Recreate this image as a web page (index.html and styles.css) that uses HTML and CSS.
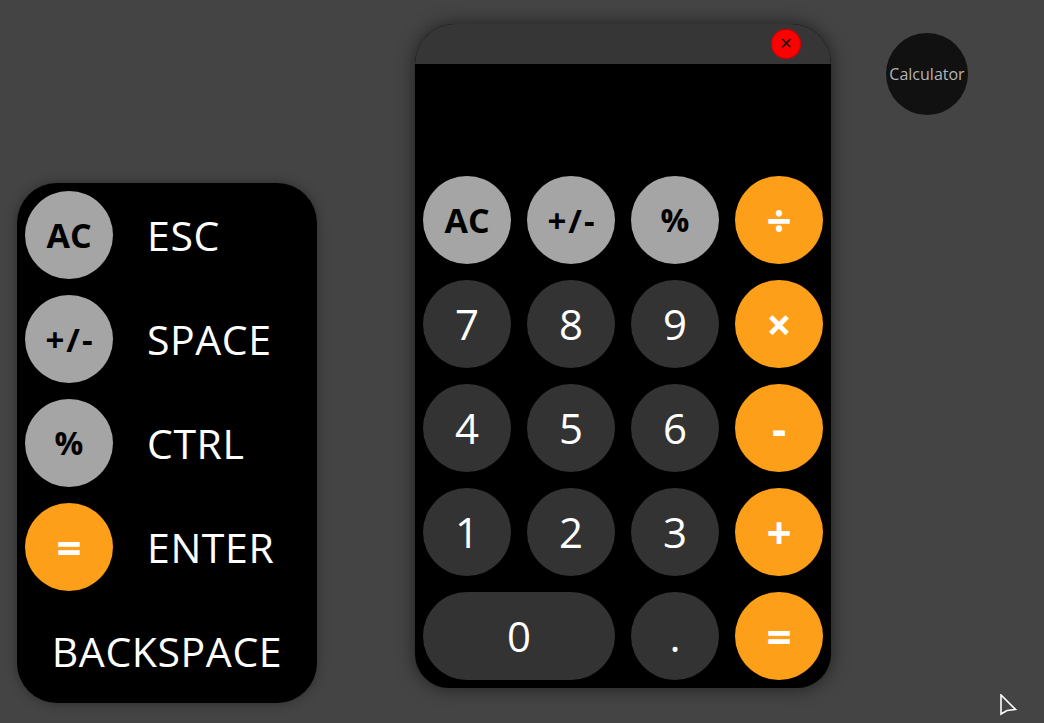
FILE: index.html
```html
<!DOCTYPE html>
<html>
<head>
<meta charset="utf-8">
<link rel="stylesheet" href="styles.css">
</head>
<body>
<div class="stage">
  <div class="keys">
    <div class="key-row"><div class="btn gray">AC</div><span class="key-label">ESC</span></div>
    <div class="key-row"><div class="btn gray small">+/-</div><span class="key-label">SPACE</span></div>
    <div class="key-row"><div class="btn gray pct">%</div><span class="key-label">CTRL</span></div>
    <div class="key-row"><div class="btn orange">=</div><span class="key-label">ENTER</span></div>
    <div class="key-row center"><span class="key-label">BACKSPACE</span></div>
  </div>

  <div class="calc">
    <div class="titlebar"><div class="close">&#x2715;</div></div>
    <div class="display"></div>
    <div class="pad">
      <div class="btn gray">AC</div>
      <div class="btn gray small">+/-</div>
      <div class="btn gray pct">%</div>
      <div class="btn orange">÷</div>
      <div class="btn dark">7</div>
      <div class="btn dark">8</div>
      <div class="btn dark">9</div>
      <div class="btn orange">×</div>
      <div class="btn dark">4</div>
      <div class="btn dark">5</div>
      <div class="btn dark">6</div>
      <div class="btn orange">-</div>
      <div class="btn dark">1</div>
      <div class="btn dark">2</div>
      <div class="btn dark">3</div>
      <div class="btn orange">+</div>
      <div class="btn dark wide">0</div>
      <div class="btn dark">.</div>
      <div class="btn orange">=</div>
    </div>
  </div>

  <div class="badge">Calculator</div>
</div>
<svg class="cursor" width="20" height="24" viewBox="0 0 20 24"><path d="M2 1 L2 20 L8 16.5 L16.5 15.5 Z" fill="#444" stroke="#fff" stroke-width="1.6" stroke-linejoin="miter"/></svg>
</body>
</html>
```
FILE: styles.css
```css
html, body {
  margin: 0;
  padding: 0;
  background: #444444;
  width: 1044px;
  height: 723px;
  overflow: hidden;
  font-family: "Open Sans", "Noto Sans", sans-serif;
}
.stage {
  display: flex;
  align-items: flex-start;
}
.keys {
  margin-left: 17px;
  margin-top: 183px;
  width: 300px;
  box-sizing: border-box;
  padding: 8px;
  background: #000;
  border-radius: 40px;
  display: flex;
  flex-direction: column;
  gap: 16px;
  box-shadow: 0 0 12px rgba(0,0,0,0.35);
}
.key-row {
  display: flex;
  align-items: center;
  height: 88px;
}
.key-row.center {
  justify-content: center;
}
.key-label {
  color: #fff;
  font-size: 41px;
  letter-spacing: 0.6px;
  margin-left: 34px;
  line-height: 1;
}
.key-row.center .key-label {
  margin-left: 0;
}
.btn {
  width: 88px;
  height: 88px;
  border-radius: 44px;
  display: flex;
  align-items: center;
  justify-content: center;
  font-size: 40px;
  flex: none;
  line-height: 1;
}
.gray {
  background: #a5a5a5;
  color: #000;
  font-weight: 700;
  font-size: 34px;
}
.gray.small {
  font-size: 33px;
  letter-spacing: 2px;
  padding-left: 2px;
  box-sizing: border-box;
}
.gray.pct {
  font-size: 32px;
}
.dark {
  background: #333333;
  color: #fff;
  font-size: 42px;
}
.orange {
  background: #fe9f19;
  color: #fff;
  font-weight: 700;
  font-size: 44px;
}
.wide {
  width: 192px;
  grid-column: span 2;
}
.calc {
  margin-left: 98px;
  margin-top: 24px;
  width: 416px;
  height: 664px;
  background: #000;
  border-radius: 40px 40px 34px 34px;
  overflow: hidden;
  display: flex;
  flex-direction: column;
  box-shadow: 0 0 18px rgba(0,0,0,0.55);
}
.titlebar {
  height: 40px;
  background: #363636;
  display: flex;
  justify-content: flex-end;
  align-items: center;
  padding-right: 30px;
  flex: none;
}
.close {
  width: 30px;
  height: 30px;
  border-radius: 15px;
  background: #ff0000;
  box-shadow: inset 0 0 0 1px #c00000;
  color: #111;
  font-size: 16px;
  display: flex;
  align-items: center;
  justify-content: center;
  line-height: 1;
  font-family: "DejaVu Sans", sans-serif;
}
.display {
  height: 112px;
  flex: none;
}
.pad {
  display: grid;
  grid-template-columns: repeat(4, 88px);
  grid-auto-rows: 88px;
  gap: 16px;
  padding: 0 8px 8px;
}
.badge {
  margin-left: 55px;
  margin-top: 33px;
  width: 82px;
  height: 82px;
  border-radius: 41px;
  background: #111;
  color: #b4b4b4;
  font-size: 16px;
  display: flex;
  align-items: center;
  justify-content: center;
}
.cursor {
  position: absolute;
  left: 999px;
  top: 694px;
}
```
